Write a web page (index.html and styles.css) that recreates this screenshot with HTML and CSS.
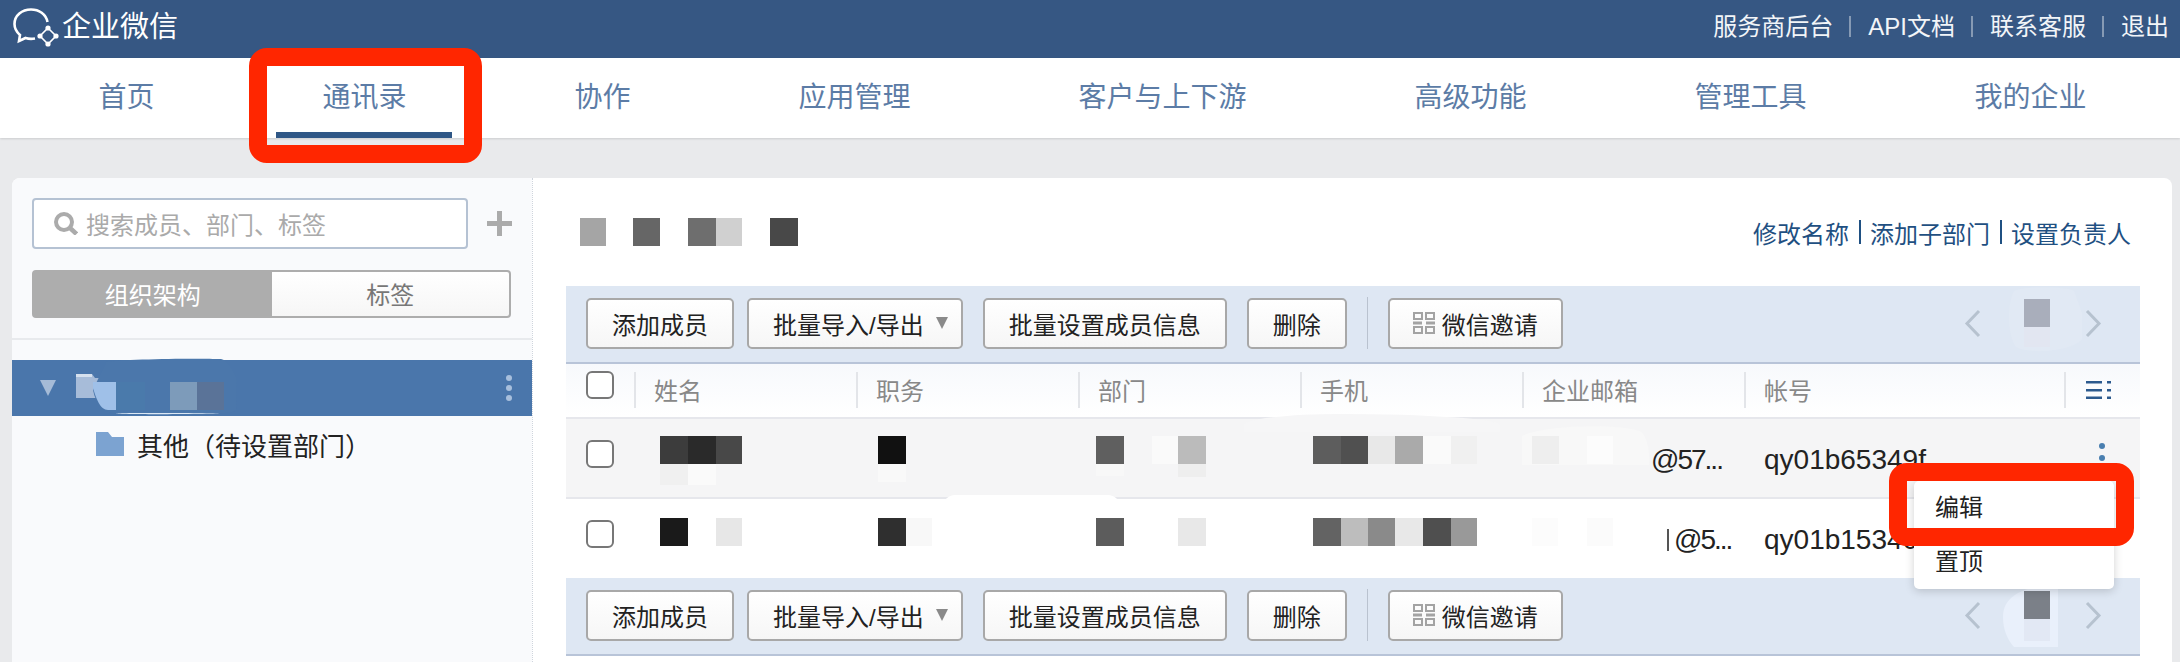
FILE: index.html
```html
<!DOCTYPE html>
<html lang="zh-CN">

<head>
    <meta charset="UTF-8">
    <title>企业微信 - 通讯录</title>
    <link rel="stylesheet" href="styles.css">
</head>

<body>
    <header class="top-bar">
        <div class="brand">
            <svg class="brand-logo" width="46" height="40" viewBox="0 0 46 40" fill="none" stroke="#fff">
                <path stroke-width="2.6" d="M34.5 14C33 6 26 1.5 18 1.5 9 1.5 1.5 7.5 1.5 16c0 4.500 2 8 5.500 11L6 33l6.500-3c2.500.8 6.500 1 9.500.5" />
                <path stroke-width="1.600" d="M35 20l8 8-8 8-8-8z" />
                <g fill="#fff" stroke="none">
                    <circle cx="35" cy="20" r="2.600" />
                    <circle cx="43" cy="28" r="2.600" />
                    <circle cx="35" cy="36" r="2.600" />
                    <circle cx="27" cy="28" r="2.600" />
                </g>
            </svg>
            <span>企业微信</span>
        </div>
        <nav class="top-links">
            <a>服务商后台</a><i></i><a>API文档</a><i></i><a>联系客服</a><i></i><a>退出</a>
        </nav>
    </header>

    <nav class="main-nav">
        <a class="nav-item"><span>首页</span></a>
        <a class="nav-item active"><span>通讯录</span></a>
        <a class="nav-item"><span>协作</span></a>
        <a class="nav-item"><span>应用管理</span></a>
        <a class="nav-item"><span>客户与上下游</span></a>
        <a class="nav-item"><span>高级功能</span></a>
        <a class="nav-item"><span>管理工具</span></a>
        <a class="nav-item"><span>我的企业</span></a>
    </nav>

    <div class="panel">
        <aside class="sidebar">
            <div class="search-row">
                <div class="search-box">
                    <svg width="24" height="23" viewBox="0 0 24 23" fill="none" stroke="#ababab">
                        <circle cx="10" cy="10" r="8" stroke-width="4" />
                        <path stroke-width="4.500" d="M16 16l6.500 6" />
                    </svg>
                    <span>搜索成员、部门、标签</span>
                </div>
                <svg class="plus" width="25" height="25" viewBox="0 0 25 25" fill="#ababab">
                    <rect x="10" width="5" height="25" />
                    <rect y="10" width="25" height="5" />
                </svg>
            </div>
            <div class="tabs">
                <div class="tab selected">组织架构</div>
                <div class="tab">标签</div>
            </div>
            <div class="tree">
                <div class="tree-row current">
                    <svg class="tree-art" width="200" height="56" viewBox="0 0 200 56">
                        <path d="M0 14h16l3 4h12v20H0z" fill="#a7bcd9" />
                        <rect y="14" width="16" height="3" fill="#d5e0ee" />
                        <path d="M30 2C45-1 120-2 145-1c6 1 12 10 16 20l-1 31c-4 3-10 3-16 3H40C28 53 20 45 17 30z" fill="#4b77ab" />
                        <path d="M40 53h104c-4 1-100 2-104 0z" fill="#dce7f3" />
                        <path d="M17 22h23v28H32c-8 0-12-12-15-22z" fill="#9fc0e8" />
                        <rect x="40" y="22" width="29" height="28" fill="#4a7aab" />
                        <rect x="69" y="22" width="25" height="28" fill="#4b77ab" />
                        <rect x="94" y="22" width="27" height="28" fill="#7d9bba" />
                        <rect x="121" y="22" width="27" height="28" fill="#5a7398" />
                    </svg>
                    <svg class="dots" width="6" height="26" viewBox="0 0 6 26" fill="#a8bfdc">
                        <circle cx="3" cy="3" r="3" />
                        <circle cx="3" cy="13" r="3" />
                        <circle cx="3" cy="23" r="3" />
                    </svg>
                </div>
                <div class="tree-row child">
                    <svg width="28" height="24" viewBox="0 0 28 24" fill="#7ca3d1">
                        <path d="M0 0h12l4 5h12v19H0z" />
                    </svg>
                    <span>其他（待设置部门）</span>
                </div>
            </div>
        </aside>

        <main class="content">
            <div class="title-row">
                <svg width="232" height="28" viewBox="0 0 232 28">
                    <rect x="14" width="26" height="28" fill="#a5a5a5" />
                    <rect x="67" width="27" height="28" fill="#666" />
                    <rect x="122" width="28" height="28" fill="#6e6e6e" />
                    <rect x="150" width="26" height="28" fill="#d0d0d0" />
                    <rect x="204" width="28" height="28" fill="#484848" />
                </svg>
                <div class="title-links">
                    <a>修改名称</a><i></i><a>添加子部门</a><i></i><a>设置负责人</a>
                </div>
            </div>

            <div class="toolbar">
                <button class="btn">添加成员</button>
                <button class="btn btn-menu">批量导入/导出<b class="caret"></b></button>
                <button class="btn">批量设置成员信息</button>
                <button class="btn">删除</button>
                <span class="tool-sep"></span>
                <button class="btn btn-invite">
                    <svg width="22" height="22" viewBox="0 0 22 22" fill="none" stroke="#a3a3a3" stroke-width="2">
                        <path d="M1 1h8v6H1zM13 1h8v6h-8zM1 15h8v6H1zM13 15h8v6h-8z" />
                        <path stroke-width="3" d="M0 11h9M13 11h9" />
                    </svg>
                    微信邀请
                </button>
                <svg class="pager" width="138" height="76" viewBox="0 0 138 76" fill="none">
                    <path d="M50 6c10-5 50-5 60 0l8 22v26c-10 12-50 16-66 8-8-10-10-40-2-56z" fill="#e1e9f4" />
                    <rect x="60" y="14" width="26" height="28" fill="#a9aebb" />
                    <rect x="60" y="42" width="26" height="20" fill="#e2e6f1" />
                    <path stroke="#b6c2cf" stroke-width="3" d="M15 26L3 38.500 15 51M123 26l12 12.500L123 51" />
                </svg>
            </div>

            <div class="member-row table-head">
                <div class="cell-check"><span class="checkbox"></span></div>
                <div class="col">姓名</div>
                <div class="col">职务</div>
                <div class="col">部门</div>
                <div class="col">手机</div>
                <div class="col">企业邮箱</div>
                <div class="col col-wide">帐号</div>
                <div class="col col-ops">
                    <svg width="25" height="18" viewBox="0 0 25 18" fill="#2c5a8e">
                        <path d="M0 0h16v2.500H0zM0 8h16v2.500H0zM0 15.500h16V18H0zM21 0h4v2.500h-4zM21 8h4v2.500h-4zM21 15.500h4V18h-4z" />
                    </svg>
                </div>
            </div>

            <div class="member-row member shaded">
                <div class="cell-check"><span class="checkbox"></span></div>
                <div class="col">
                    <svg width="222" height="78" viewBox="0 0 222 78">
                        <rect x="26" y="17" width="28" height="28" fill="#3c3c3c" />
                        <rect x="54" y="17" width="28" height="28" fill="#2a2a2a" />
                        <rect x="82" y="17" width="26" height="28" fill="#484848" />
                        <rect x="26" y="45" width="28" height="21" fill="#f0f0f0" />
                        <rect x="54" y="45" width="28" height="21" fill="#fafafa" />
                    </svg>
                </div>
                <div class="col">
                    <svg width="222" height="78" viewBox="0 0 222 78">
                        <rect x="22" y="17" width="28" height="28" fill="#111" />
                        <rect x="22" y="45" width="28" height="18" fill="#f9f9f9" />
                    </svg>
                </div>
                <div class="col">
                    <svg width="222" height="78" viewBox="0 0 222 78">
                        <rect x="18" y="17" width="28" height="28" fill="#5f5f5f" />
                        <rect x="74" y="17" width="26" height="28" fill="#fafafa" />
                        <rect x="100" y="17" width="28" height="28" fill="#bbb" />
                        <rect x="18" y="45" width="28" height="12" fill="#f8f8f8" />
                        <rect x="100" y="45" width="28" height="13" fill="#eee" />
                    </svg>
                </div>
                <div class="col">
                    <svg width="222" height="78" viewBox="0 0 222 78">
                        <rect x="13" y="17" width="28" height="28" fill="#5d5d5d" />
                        <rect x="41" y="17" width="27" height="28" fill="#505050" />
                        <rect x="68" y="17" width="27" height="28" fill="#e8e8e8" />
                        <rect x="95" y="17" width="28" height="28" fill="#aaa" />
                        <rect x="123" y="17" width="28" height="28" fill="#fafafa" />
                        <rect x="151" y="17" width="26" height="28" fill="#f0f0f0" />
                    </svg>
                </div>
                <div class="col">
                    <svg width="129" height="78" viewBox="0 0 129 78">
                        <path d="M0 17C20 6 95 4 118 12c8 6 10 22 9 34H0z" fill="#f8f8f8" />
                        <rect x="10" y="17" width="27" height="28" fill="#eee" />
                        <rect x="65" y="17" width="26" height="28" fill="#fcfcfc" />
                    </svg>
                    <span class="cell-text email">@57...</span>
                </div>
                <div class="col col-wide"><span class="cell-text account">qy01b65349f</span></div>
                <div class="col col-ops">
                    <svg width="6" height="30" viewBox="0 0 6 30" fill="#4a7fb0">
                        <circle cx="3" cy="3" r="3" />
                        <circle cx="3" cy="15" r="3" />
                        <circle cx="3" cy="27" r="3" />
                    </svg>
                </div>
            </div>

            <div class="member-row member last">
                <div class="cell-check"><span class="checkbox"></span></div>
                <div class="col">
                    <svg width="222" height="78" viewBox="0 0 222 78">
                        <rect x="26" y="19" width="28" height="28" fill="#1a1a1a" />
                        <rect x="82" y="19" width="26" height="28" fill="#e7e7e7" />
                    </svg>
                </div>
                <div class="col">
                    <svg width="222" height="78" viewBox="0 0 222 78">
                        <rect x="22" y="19" width="28" height="28" fill="#2f2f2f" />
                        <rect x="50" y="19" width="26" height="28" fill="#f8f8f8" />
                    </svg>
                </div>
                <div class="col">
                    <svg width="222" height="78" viewBox="0 0 222 78">
                        <rect x="18" y="19" width="28" height="28" fill="#5c5c5c" />
                        <rect x="100" y="19" width="28" height="28" fill="#e8e8e8" />
                    </svg>
                </div>
                <div class="col">
                    <svg width="222" height="78" viewBox="0 0 222 78">
                        <rect x="13" y="19" width="28" height="28" fill="#636363" />
                        <rect x="41" y="19" width="27" height="28" fill="#bdbdbd" />
                        <rect x="68" y="19" width="27" height="28" fill="#8a8a8a" />
                        <rect x="95" y="19" width="28" height="28" fill="#e8e8e8" />
                        <rect x="123" y="19" width="28" height="28" fill="#4f4f4f" />
                        <rect x="151" y="19" width="26" height="28" fill="#999" />
                    </svg>
                </div>
                <div class="col">
                    <svg width="152" height="78" viewBox="0 0 152 78">
                        <rect x="10" y="19" width="26" height="28" fill="#fcfcfc" />
                        <rect x="65" y="19" width="26" height="28" fill="#fbfbfb" />
                        <rect x="145" y="30" width="2" height="22" fill="#555" />
                    </svg>
                    <span class="cell-text email">@5...</span>
                </div>
                <div class="col col-wide"><span class="cell-text account">qy01b15340</span></div>
                <div class="col col-ops"></div>
            </div>

            <div class="toolbar">
                <button class="btn">添加成员</button>
                <button class="btn btn-menu">批量导入/导出<b class="caret"></b></button>
                <button class="btn">批量设置成员信息</button>
                <button class="btn">删除</button>
                <span class="tool-sep"></span>
                <button class="btn btn-invite">
                    <svg width="22" height="22" viewBox="0 0 22 22" fill="none" stroke="#a3a3a3" stroke-width="2">
                        <path d="M1 1h8v6H1zM13 1h8v6h-8zM1 15h8v6H1zM13 15h8v6h-8z" />
                        <path stroke-width="3" d="M0 11h9M13 11h9" />
                    </svg>
                    微信邀请
                </button>
                <svg class="pager" width="138" height="76" viewBox="0 0 138 76" fill="none">
                    <path d="M39 40c0-18 14-30 55-34v64H50c-7-8-11-18-11-30z" fill="#e9f0fb" />
                    <rect x="60" y="14" width="26" height="28" fill="#7b8088" />
                    <rect x="60" y="42" width="26" height="22" fill="#e2e8f4" />
                    <path stroke="#b6c2cf" stroke-width="3" d="M15 26L3 38.500 15 51M123 26l12 12.500L123 51" />
                </svg>
            </div>
        </main>
    </div>

    <!-- wiped patches left over the table lines -->
    <div class="smudge smudge-head"></div>
    <div class="smudge smudge-row"></div>

    <ul class="row-menu">
        <li>编辑</li>
        <li>置顶</li>
    </ul>

    <div class="mark mark-nav"></div>
    <div class="mark mark-menu"></div>
</body>

</html>
```
FILE: styles.css
```css
:root {
    --bar-color: #365783;
    --nav-text: #5c7ca6;
    --link-color: #1f5082;
    --page-bg: #e9eaec;
    --line-color: #e6e7ec;
    --tool-bg: #dee7f3;
    --tool-line: #b8c4d8;
    --mark-color: #ff2600;
}

* {
    box-sizing: border-box;
}

html,
body {
    height: 662px;
    overflow: hidden;
}

body {
    position: relative;
    margin: 0;
    background-color: var(--page-bg);
    color: #222;
    font-family: "Liberation Sans", "Noto Sans CJK SC", sans-serif;
    font-size: 24px;
}

svg {
    display: block;
    flex-shrink: 0;
}

/* top bar */

.top-bar {
    display: flex;
    justify-content: space-between;
    align-items: center;
    height: 58px;
    padding: 0 11px 10px 13px;
    background-color: var(--bar-color);
    color: #f2f5f8;
}

.brand {
    display: flex;
    align-items: center;
    gap: 3px;
    color: #fff;
    font-size: 29px;
}

.brand-logo {
    margin-top: 8px;
}

.top-links {
    display: flex;
    align-items: center;
}

.top-links i {
    width: 2px;
    height: 21px;
    margin: 4px 17px 0 16px;
    background-color: rgba(255, 255, 255, 0.4);
}

/* main navigation */

.main-nav {
    position: relative;
    display: flex;
    justify-content: center;
    height: 80px;
    padding-left: 5px;
    background-color: #fff;
    box-shadow: 0 1px 2px rgba(0, 0, 0, 0.12);
    color: var(--nav-text);
    font-size: 28px;
}

.nav-item {
    padding: 0 38px;
}

.nav-item span {
    display: block;
    height: 80px;
    padding: 0 46px;
    line-height: 80px;
}

.nav-item.active span {
    border-bottom: 6px solid #2f5786;
}

/* panel */

.panel {
    display: flex;
    height: 484px;
    margin: 40px 8px 0 12px;
    border-radius: 8px 8px 0 0;
    background-color: #fff;
    overflow: hidden;
}

.sidebar {
    width: 520px;
    padding-top: 20px;
    background-color: #f9fafc;
}

.search-row {
    display: flex;
    align-items: center;
    gap: 19px;
    padding: 0 20px;
}

.search-box {
    display: flex;
    align-items: center;
    gap: 8px;
    width: 436px;
    height: 51px;
    padding-left: 20px;
    border: 2px solid #b5c2d3;
    border-radius: 4px;
    background-color: #fff;
    color: #aaa;
}

.tabs {
    display: flex;
    width: 479px;
    height: 48px;
    margin: 21px 0 20px 20px;
    border: 2px solid #adadad;
    border-radius: 4px;
    background: linear-gradient(#fff, #f6f6f6);
    color: #777;
}

.tab {
    flex: 1;
    line-height: 48px;
    text-align: center;
}

.tab.selected {
    background-color: #adadad;
    color: #fff;
}

.tree {
    padding-top: 20px;
    border-top: 2px solid #e8eaed;
}

.tree-row {
    display: flex;
    align-items: center;
    height: 56px;
}

.tree-row.current {
    justify-content: space-between;
    padding: 0 20px 0 64px;
    background-color: #4a76ab;
}

.tree-row.current::before {
    content: "";
    position: absolute;
    left: 40px;
    top: 380px;
    border-style: solid;
    border-width: 16px 8px 0;
    border-color: #a5bbd7 transparent transparent;
}

.tree-art {
    overflow: visible;
}

.tree-row.child {
    gap: 13px;
    padding-left: 84px;
    color: #222;
    font-size: 26px;
}

/* members */

.content {
    flex: 1;
    padding: 0 32px 0 33px;
    border-left: 1px dotted #cfd5dd;
}

.title-row {
    display: flex;
    justify-content: space-between;
    align-items: flex-start;
    height: 108px;
    padding: 40px 9px 0 0;
}

.title-links {
    display: flex;
    align-items: center;
    height: 28px;
    color: var(--link-color);
}

.title-links i {
    width: 2px;
    height: 24px;
    margin: 0 9px 0 10px;
    background-color: var(--link-color);
}

.toolbar {
    display: flex;
    align-items: center;
    height: 78px;
    padding: 0 38px 2px 20px;
    border-bottom: 2px solid var(--tool-line);
    background-color: var(--tool-bg);
}

.btn {
    display: flex;
    align-items: center;
    height: 51px;
    margin-right: 20px;
    padding: 0 24px;
    border: 2px solid #a8a8a8;
    border-radius: 5px;
    background: linear-gradient(#fff, #f6f6f6);
    color: #222;
    font: inherit;
}

.toolbar .btn:first-child {
    margin-right: 13px;
}

.btn-menu {
    padding-right: 13px;
}

.caret {
    margin-left: 12px;
    border-style: solid;
    border-width: 12px 6.500px 0;
    border-color: #8a8a8a transparent transparent;
}

.btn-invite {
    gap: 7px;
    margin-right: 0;
    padding: 0 23px;
}

.tool-sep {
    width: 1px;
    height: 52px;
    margin-right: 20px;
    background-color: #b9c2cf;
}

.pager {
    margin-left: auto;
}

.member-row {
    display: flex;
    align-items: center;
}

.table-head {
    height: 55px;
    padding-bottom: 2px;
    border-bottom: 2px solid var(--line-color);
    background: linear-gradient(#f7f9fc, #fff);
    color: #888;
}

.cell-check {
    width: 68px;
    margin-bottom: 9px;
    padding-left: 20px;
}

.checkbox {
    display: block;
    width: 28px;
    height: 28px;
    border: 2px solid #777;
    border-radius: 6px;
    background-color: #fff;
}

.col {
    display: flex;
    align-items: center;
    width: 222px;
    height: 36px;
}

.table-head .col {
    padding-left: 18px;
    border-left: 2px solid #e3e5e9;
}

.col-wide {
    width: 320px;
}

.col-ops {
    width: 75px;
}

.table-head .col-ops {
    padding-left: 20px;
}

.member {
    height: 80px;
    border-bottom: 2px solid var(--line-color);
}

.member.shaded {
    background-color: #f5f5f6;
}

.member.last {
    height: 79px;
    padding-bottom: 1px;
    border-bottom: 0;
}

.member .col-ops {
    padding-left: 35px;
}

.cell-text {
    margin-top: 4px;
    font-size: 28px;
    color: #222;
    white-space: nowrap;
}

.email {
    letter-spacing: -2px;
}

.account {
    padding-left: 20px;
}

/* things lying over the table */

.smudge {
    position: absolute;
}

.smudge-head {
    left: 1244px;
    top: 414px;
    width: 256px;
    height: 18px;
    border-radius: 60% 100% 0 0 / 100% 100% 0 0;
    background-color: #f6f6f7;
}

.smudge-row {
    left: 943px;
    top: 495px;
    width: 177px;
    height: 12px;
    border-radius: 40px 40px 0 0;
    background-color: #fff;
}

.row-menu {
    position: absolute;
    left: 1914px;
    top: 481px;
    width: 200px;
    margin: 0;
    padding: 0;
    border-radius: 5px;
    background-color: #fff;
    box-shadow: 0 2px 10px rgba(0, 0, 0, 0.18);
    list-style: none;
}

.row-menu li {
    height: 54px;
    padding-left: 21px;
    line-height: 54px;
}

.mark {
    position: absolute;
    border: 18px solid var(--mark-color);
    border-radius: 18px;
}

.mark-nav {
    left: 249px;
    top: 48px;
    width: 233px;
    height: 115px;
}

.mark-menu {
    left: 1889px;
    top: 463px;
    width: 245px;
    height: 83px;
}
```
